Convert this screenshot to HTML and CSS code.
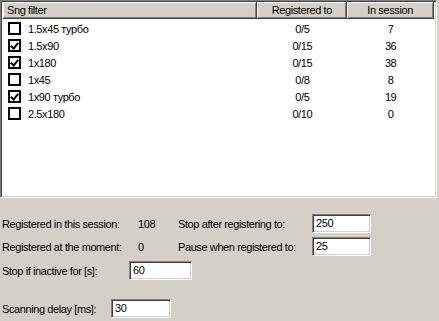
FILE: index.html
```html
<!DOCTYPE html>
<html lang="en">
<head>
    <meta charset="UTF-8">
    <title>Sng filter</title>
    <link rel="stylesheet" href="styles.css">
</head>
<body>
    <div class="list">
        <div class="list-head">
            <div class="col col-name">Sng filter</div>
            <div class="col col-reg">Registered to</div>
            <div class="col col-ses">In session</div>
        </div>
        <div class="list-body">
            <div class="row">
                <div class="cell cell-name"><span class="check"></span>1.5x45 турбо</div>
                <div class="cell cell-reg">0/5</div>
                <div class="cell cell-ses">7</div>
            </div>
            <div class="row">
                <div class="cell cell-name"><span class="check on"></span>1.5x90</div>
                <div class="cell cell-reg">0/15</div>
                <div class="cell cell-ses">36</div>
            </div>
            <div class="row">
                <div class="cell cell-name"><span class="check on"></span>1x180</div>
                <div class="cell cell-reg">0/15</div>
                <div class="cell cell-ses">38</div>
            </div>
            <div class="row">
                <div class="cell cell-name"><span class="check"></span>1x45</div>
                <div class="cell cell-reg">0/8</div>
                <div class="cell cell-ses">8</div>
            </div>
            <div class="row">
                <div class="cell cell-name"><span class="check on"></span>1x90 турбо</div>
                <div class="cell cell-reg">0/5</div>
                <div class="cell cell-ses">19</div>
            </div>
            <div class="row">
                <div class="cell cell-name"><span class="check"></span>2.5x180</div>
                <div class="cell cell-reg">0/10</div>
                <div class="cell cell-ses">0</div>
            </div>
        </div>
    </div>

    <div class="panel">
        <div class="stats">
            <span>Registered in this session:</span>
            <span>108</span>
            <span>Stop after registering to:</span>
            <span class="field">250</span>

            <span>Registered at the moment:</span>
            <span>0</span>
            <span>Pause when registered to:</span>
            <span class="field">25</span>
        </div>

        <div class="line line-inactive">
            <span class="label">Stop if inactive for [s]:</span>
            <span class="field">60</span>
        </div>

        <div class="line line-delay">
            <span class="label">Scanning delay [ms]:</span>
            <span class="field">30</span>
        </div>
    </div>
</body>
</html>
```

FILE: styles.css
```css
:root {
    --face: #d4d0c8;
    --shadow: #808080;
    --dark: #404040;
}

body {
    margin: 0;
    background: var(--face);
    color: #000;
    font-family: 'Liberation Sans', Arial, sans-serif;
    font-size: 11px;
    letter-spacing: -0.4px;
    white-space: nowrap;
    width: 439px;
    height: 321px;
    overflow: hidden;
}

/* список фильтров */
.list {
    width: 437px;
    height: 198px;
    box-sizing: border-box;
    background: #fff;
    border: 1px solid;
    border-color: var(--shadow) #fff #fff var(--shadow);
    box-shadow: inset 1px 1px 0 var(--dark), inset -1px -1px 0 var(--face);
    padding: 1px 2px 2px 2px;
}

.list-head {
    display: flex;
    height: 17px;
}

.col {
    box-sizing: border-box;
    background: var(--face);
    border-right: 1px solid var(--dark);
    border-bottom: 1px solid var(--dark);
    box-shadow: inset 1px 1px 0 #fff, inset -1px -1px 0 var(--shadow);
    line-height: 16px;
    padding: 0 4px;
}

.col-name { width: 255px; }
.col-reg { width: 90px; text-align: center; }
.col-ses { width: 87px; text-align: center; }

.list-body {
    padding-top: 1px;
}

.row {
    display: flex;
    height: 17px;
    align-items: center;
}

.cell-name {
    width: 255px;
    display: flex;
    align-items: center;
    padding-left: 5px;
    box-sizing: border-box;
}

.cell-reg { width: 90px; text-align: center; }
.cell-ses { width: 87px; text-align: center; }

.check {
    width: 13px;
    height: 13px;
    box-sizing: border-box;
    border: 2px solid #000;
    background: #fff;
    margin-right: 7px;
    position: relative;
}

.check.on::after {
    content: "";
    position: absolute;
    left: 2px;
    top: 0px;
    width: 3px;
    height: 6px;
    border: solid #000;
    border-width: 0 2px 2px 0;
    transform: rotate(40deg);
}

/* нижняя панель */
.panel {
    padding: 16px 0 0 2px;
}

.stats {
    display: grid;
    grid-template-columns: 136px 40px 134px 59px;
    grid-auto-rows: 19px;
    row-gap: 4px;
    align-items: center;
}

.line {
    display: flex;
    align-items: center;
    height: 19px;
}

.line-inactive { margin-top: 5px; }
.line-inactive .label { width: 127px; }

.line-delay { margin-top: 19px; }
.line-delay .label { width: 109px; }

.field {
    box-sizing: border-box;
    height: 19px;
    width: 59px;
    background: #fff;
    border: 1px solid;
    border-color: var(--shadow) #fff #fff var(--shadow);
    box-shadow: inset 1px 1px 0 var(--dark), inset -1px -1px 0 var(--face);
    padding-left: 3px;
    line-height: 17px;
}

.line-inactive .field { width: 63px; }
.line-delay .field { width: 60px; }
```
